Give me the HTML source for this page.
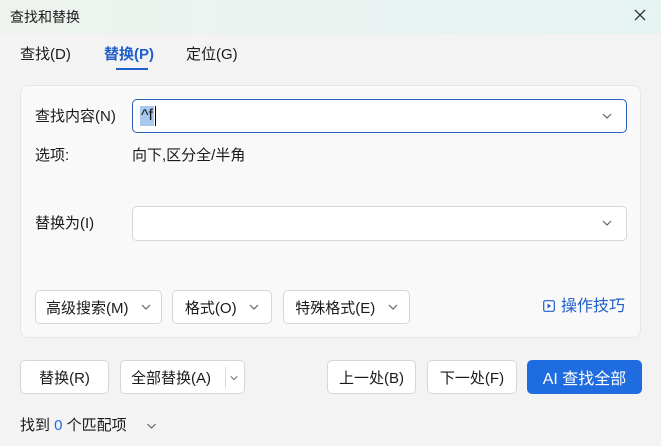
<!DOCTYPE html><html><head><meta charset="utf-8"><style>
*{box-sizing:border-box;margin:0;padding:0}
body{width:661px;height:446px;overflow:hidden;background:#f3f3f3;font-family:"Liberation Sans","Noto Sans CJK SC",sans-serif;font-size:15px;color:#1a1a1a;position:relative}
.a{position:absolute;line-height:20px}
.title{left:0;top:0;width:661px;height:34px;background:linear-gradient(90deg,#eef3ee,#e6f3f3);}
.btn{position:absolute;background:#fff;border:1px solid #d6d6d6;border-radius:5px;display:flex;align-items:center;justify-content:center;font-size:15px}
.inp{position:absolute;background:#fff;border:1px solid #d6d6d6;border-radius:5px}
svg.c{width:10px;height:6px;display:inline-block}
</style></head><body>
<svg width="0" height="0" style="position:absolute"><defs><symbol id="ch" viewBox="0 0 10 6"><path d="M1 1L5 5L9 1" fill="none" stroke="#666" stroke-width="1.2"/></symbol></defs></svg>
<div class="a title"></div>
<div class="a" style="left:10px;top:7px;font-size:14px">查找和替换</div>
<svg class="a" style="left:634px;top:9px" width="12" height="12"><path d="M1 1L11 11M11 1L1 11" stroke="#333" stroke-width="1.3"/></svg>
<div class="a" style="left:20px;top:45px">查找(D)</div>
<div class="a" style="left:104px;top:45px;color:#1f5fc9;font-weight:bold">替换(P)</div>
<div class="a" style="left:116px;top:68px;width:32px;height:2px;background:#1f5fc9"></div>
<div class="a" style="left:186px;top:45px">定位(G)</div>
<div class="a" style="left:20px;top:85px;width:621px;height:253px;background:#f9f9f9;border:1px solid #e6e6e6;border-radius:8px"></div>
<div class="a" style="left:35px;top:107px">查找内容(N)</div>
<div class="inp" style="left:132px;top:99px;width:495px;height:34px;border:1.5px solid #2a5fb8"></div>
<div class="a" style="left:140px;top:106px;height:20px;background:#a9c8f0;padding:0 1px;font-size:16px;line-height:20px">^f</div>
<div class="a" style="left:155px;top:106px;width:1px;height:20px;background:#000"></div>
<svg class="a c" style="left:602px;top:113px"><use href="#ch"/></svg>
<div class="a" style="left:35px;top:146px">选项:</div>
<div class="a" style="left:132px;top:146px">向下,区分全/半角</div>
<div class="a" style="left:35px;top:214px">替换为(I)</div>
<div class="inp" style="left:132px;top:206px;width:495px;height:35px"></div>
<svg class="a c" style="left:602px;top:220px"><use href="#ch"/></svg>
<div class="btn" style="left:35px;top:290px;width:127px;height:34px">高级搜索(M)&nbsp;&nbsp;&nbsp;<svg class="c"><use href="#ch"/></svg></div>
<div class="btn" style="left:172px;top:290px;width:100px;height:34px">格式(O)&nbsp;&nbsp;&nbsp;<svg class="c"><use href="#ch"/></svg></div>
<div class="btn" style="left:283px;top:290px;width:127px;height:34px">特殊格式(E)&nbsp;&nbsp;&nbsp;<svg class="c"><use href="#ch"/></svg></div>
<svg class="a" style="left:543px;top:300px" width="12" height="12"><rect x="0.7" y="0.7" width="10.6" height="10.6" rx="1.5" fill="none" stroke="#1f5fc9" stroke-width="1.2"/><path d="M4.5 3.5L8 6L4.5 8.5Z" fill="#1f5fc9"/></svg>
<div class="a" style="left:561px;top:297px;color:#1f5fc9;font-size:16px">操作技巧</div>
<div class="btn" style="left:20px;top:360px;width:89px;height:34px">替换(R)</div>
<div class="btn" style="left:120px;top:360px;width:125px;height:34px;justify-content:flex-start;padding-left:10px">全部替换(A)<span style="position:absolute;left:104px;top:6px;width:1px;height:21px;background:#ddd"></span><svg class="c" style="position:absolute;left:109px;top:14px;width:8px"><use href="#ch"/></svg></div>
<div class="btn" style="left:327px;top:360px;width:89px;height:34px">上一处(B)</div>
<div class="btn" style="left:427px;top:360px;width:90px;height:34px">下一处(F)</div>
<div class="btn" style="left:527px;top:360px;width:115px;height:34px;background:#1f6be0;border-color:#1f6be0;color:#fff;font-size:16px">AI 查找全部</div>
<div class="a" style="left:20px;top:416px">找到 <span style="color:#1f6be0">0</span> 个匹配项</div>
<svg class="a c" style="left:146px;top:423px;width:11px"><use href="#ch"/></svg>
</body></html>
